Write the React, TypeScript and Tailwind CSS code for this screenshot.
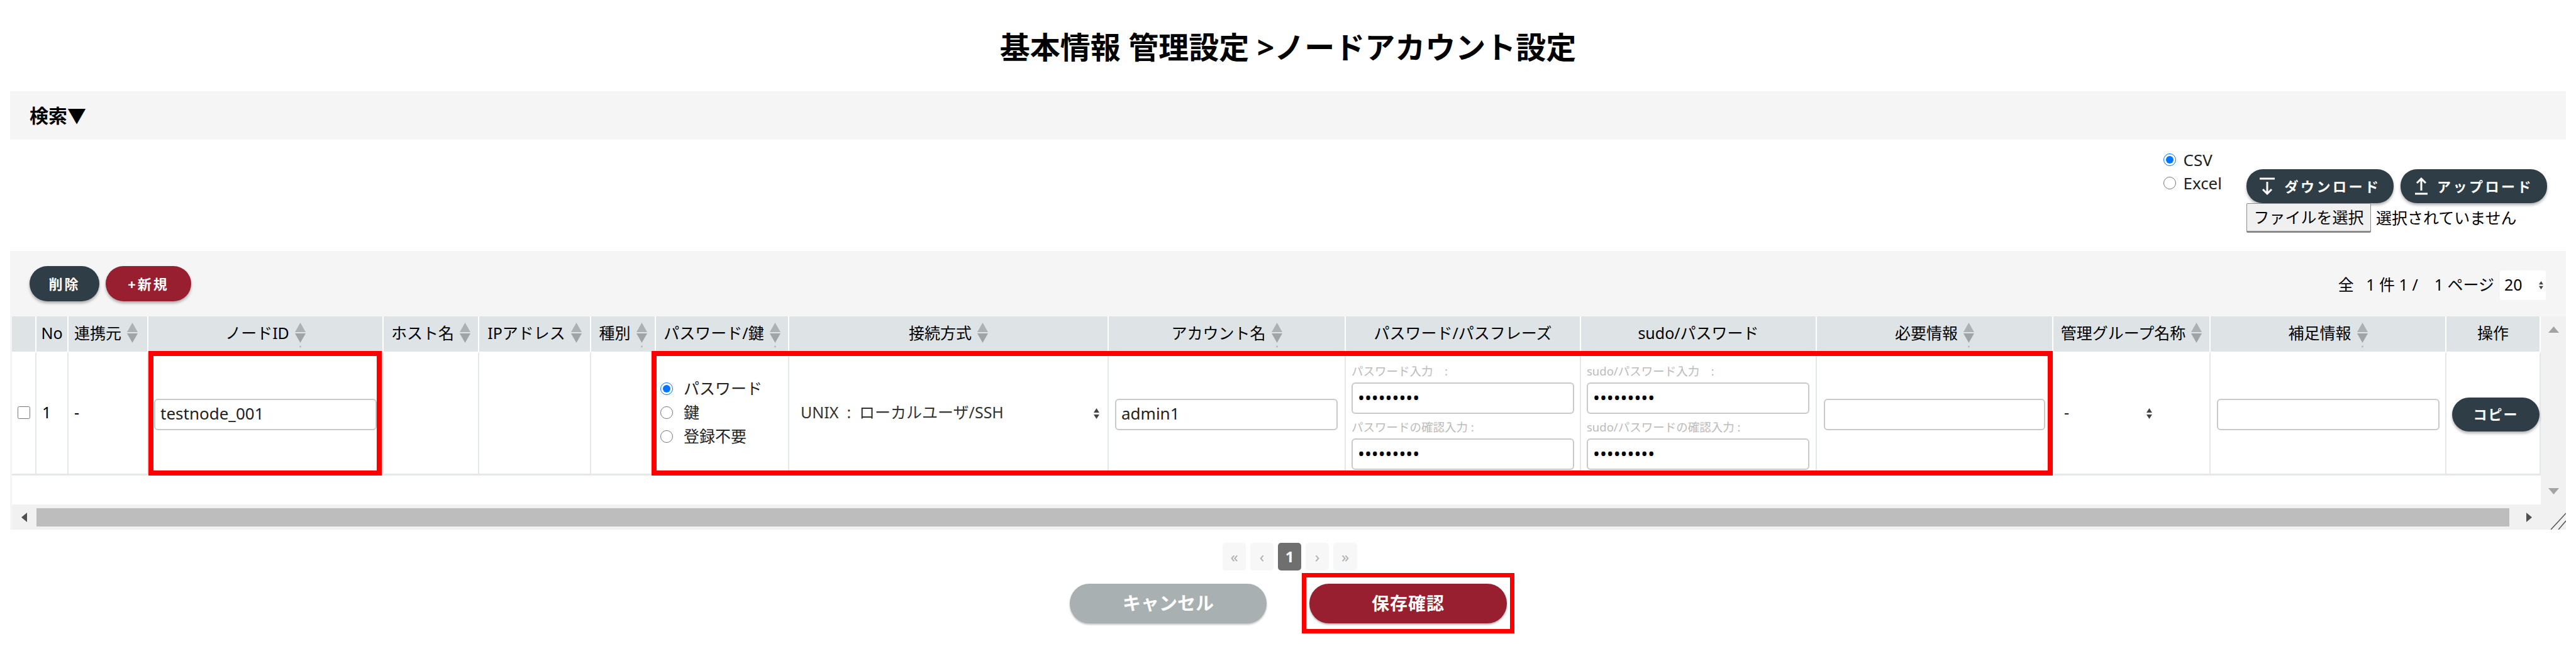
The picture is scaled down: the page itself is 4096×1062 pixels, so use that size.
import React from 'react';

const SortIcon = ({ dot }: { dot?: boolean }) => (
  <svg width="17" height="40" viewBox="0 0 17 40" className="shrink-0 mt-[6px]">
    <path d="M8.5 0 L17 15 L0 15 Z" fill="#adb1b4" />
    <path d="M0 17 L17 17 L8.5 32 Z" fill="#a0a4a7" />
    {dot && <circle cx="8.5" cy="38" r="1.5" fill="#b5b9bc" />}
  </svg>
);

const SelectArrows = () => (
  <svg width="9" height="17" viewBox="0 0 9 17" className="shrink-0">
    <path d="M4.5 0 L9 7 L0 7 Z" fill="#444" />
    <path d="M0 10 L9 10 L4.5 17 Z" fill="#444" />
  </svg>
);

const headers = [
  { label: '', sort: false },
  { label: 'No', sort: false },
  { label: '連携元', sort: true, left: true },
  { label: 'ノードID', sort: true, dot: true },
  { label: 'ホスト名', sort: true },
  { label: 'IPアドレス', sort: true },
  { label: '種別', sort: true, dot: true },
  { label: 'パスワード/鍵', sort: true, dot: true },
  { label: '接続方式', sort: true },
  { label: 'アカウント名', sort: true, dot: true },
  { label: 'パスワード/パスフレーズ', sort: false },
  { label: 'sudo/パスワード', sort: false },
  { label: '必要情報', sort: true, dot: true },
  { label: '管理グループ名称', sort: true },
  { label: '補足情報', sort: true, dot: true },
  { label: '操作', sort: false },
];

const tdClass = 'border-r-[2px] border-r-[#e4e8eb] border-b-[3px] border-b-[#e4e8eb] border-t-[3px] border-t-white align-middle p-0';
const inputClass = 'block h-[50px] rounded-[6px] border-[2px] border-[#c9c9c9] bg-white pl-[8px] pb-[4px] text-[26px] text-[#222] outline-none';
const passwordClass = 'block w-[354px] h-[50px] mt-[7px] rounded-[6px] border-[2px] border-[#c9c9c9] bg-white pl-[8px] pb-[4px] text-[29px] text-black outline-none';

const PasswordPair = ({ first, second }: { first: string; second: string }) => (
  <div className="flex flex-col pl-[9px]">
    <label className="h-[23px] text-[18.5px] leading-[23px] text-[#bbbbbb] whitespace-pre">{first}</label>
    <input type="password" defaultValue="password1" className={passwordClass} />
    <label className="h-[23px] mt-[9px] text-[18.5px] leading-[23px] text-[#bbbbbb] whitespace-pre">{second}</label>
    <input type="password" defaultValue="password1" className={passwordClass} />
  </div>
);

const App: React.FC = () => {
  return (
    <div className="w-[4096px] min-h-[1062px] bg-white text-black font-['Noto_Sans','Noto_Sans_CJK_JP',sans-serif]">
      {/* Title */}
      <div className="h-[145px] flex items-center justify-center pt-[4px]">
        <h1 className="text-[48px] font-bold leading-none">基本情報 管理設定 &gt;ノードアカウント設定</h1>
      </div>

      {/* Search */}
      <div className="mx-[16px] h-[77px] bg-[#f5f5f5] flex items-center pl-[31px]">
        <span className="text-[30px] font-bold leading-none">検索▼</span>
      </div>

      {/* CSV / Excel */}
      <div className="h-[177px] flex justify-end pr-[46px]">
        <div className="mt-[21px] mr-[39px] flex flex-col gap-[15px] text-[26px] leading-[22px] text-[#222]">
          <label className="flex items-center gap-[11px]">
            <input type="radio" name="format" defaultChecked className="w-[20px] h-[20px] m-0" />CSV
          </label>
          <label className="flex items-center gap-[11px]">
            <input type="radio" name="format" className="w-[20px] h-[20px] m-0" />Excel
          </label>
        </div>
        <div className="mt-[47px] w-[478px]">
          <div className="flex gap-[11px]">
            <button className="w-[234px] h-[54px] rounded-[26px] bg-[#2f3e46] text-white text-[22px] font-bold tracking-[3.5px] flex items-center justify-center gap-[14px] shadow-[0_3px_4px_rgba(0,0,0,0.3)]">
              <svg width="26" height="28" viewBox="0 0 26 28" fill="none" stroke="white" strokeWidth="3">
                <path d="M1 2 H25" />
                <path d="M13 7 V26 M6 19 L13 26 L20 19" />
              </svg>
              ダウンロード
            </button>
            <button className="w-[233px] h-[54px] rounded-[26px] bg-[#2f3e46] text-white text-[22px] font-bold tracking-[3.5px] flex items-center justify-center gap-[14px] shadow-[0_3px_4px_rgba(0,0,0,0.3)]">
              <svg width="22" height="28" viewBox="0 0 22 28" fill="none" stroke="white" strokeWidth="3">
                <path d="M1 26 H21" />
                <path d="M11 21 V2 M4 9 L11 2 L18 9" />
              </svg>
              アップロード
            </button>
          </div>
          <div className="flex items-center gap-[8px] text-[25px] leading-none">
            <button className="w-[198px] h-[47px] bg-[#f0f0f0] border border-[#8a8a8a] border-b-[3px] rounded-[2px] text-[25px] whitespace-nowrap">ファイルを選択</button>
            <span className="whitespace-nowrap">選択されていません</span>
          </div>
        </div>
      </div>

      {/* Table panel */}
      <div className="mx-[16px] bg-[#f5f5f5] pl-[3px]">
        <div className="h-[104px] flex items-center justify-between pl-[28px] pr-[32px]">
          <div className="flex gap-[10px]">
            <button className="w-[111px] h-[56px] rounded-[28px] bg-[#2f3e46] text-white text-[22px] font-bold tracking-[3px] shadow-[0_3px_4px_rgba(0,0,0,0.3)]">削除</button>
            <button className="w-[136px] h-[56px] rounded-[28px] bg-[#981f30] text-white text-[22px] font-bold tracking-[3px] shadow-[0_3px_4px_rgba(0,0,0,0.3)]">+新規</button>
          </div>
          <div className="flex items-center gap-[9px] mt-[4px] text-[25px]">
            <span className="whitespace-pre">全   1 件 1 /    1 ページ</span>
            <div className="w-[73px] h-[47px] bg-white rounded-[3px] flex items-center justify-between pl-[7px] pr-[4px]">
              20
              <svg width="7" height="15" viewBox="0 0 9 17"><path d="M4.5 0 L9 7 L0 7 Z M0 10 L9 10 L4.5 17 Z" fill="#444" /></svg>
            </div>
          </div>
        </div>

        <div className="flex">
          <div className="relative w-[4021px] h-[299px] bg-white">
            <table className="table-fixed w-[4021px] border-separate border-spacing-0 text-[25px]">
              <colgroup>
                <col className="w-[39px]" />
                <col className="w-[51px]" />
                <col className="w-[127px]" />
                <col className="w-[374px]" />
                <col className="w-[152px]" />
                <col className="w-[178px]" />
                <col className="w-[103px]" />
                <col className="w-[212px]" />
                <col className="w-[508px]" />
                <col className="w-[377px]" />
                <col className="w-[374px]" />
                <col className="w-[375px]" />
                <col className="w-[376px]" />
                <col className="w-[250px]" />
                <col className="w-[375px]" />
                <col className="w-[150px]" />
              </colgroup>
              <thead>
                <tr>
                  {headers.map((h) => (
                    <th key={h.label} className="h-[56px] bg-[#dee3e6] border-r-[2px] border-r-white p-0 font-normal">
                      <div className={`flex items-center gap-[9px] pb-[3px] whitespace-nowrap ${h.left ? 'justify-start pl-[9px]' : 'justify-center'}`}>
                        <span>{h.label}</span>
                        {h.sort && <SortIcon dot={h.dot} />}
                      </div>
                    </th>
                  ))}
                </tr>
              </thead>
              <tbody>
                <tr className="h-[197px]">
                  <td className={`${tdClass} pb-[4px]`}>
                    <div className="flex justify-center">
                      <input type="checkbox" className="w-[20px] h-[20px] m-0" />
                    </div>
                  </td>
                  <td className={`${tdClass} pl-[9px] pb-[3px]`}>1</td>
                  <td className={`${tdClass} pl-[9px] pb-[3px]`}>-</td>
                  <td className={`${tdClass} pl-[9px] pt-[3px]`}>
                    <input type="text" defaultValue="testnode_001" className={`${inputClass} w-[354px]`} />
                  </td>
                  <td className={tdClass}></td>
                  <td className={tdClass}></td>
                  <td className={tdClass}></td>
                  <td className={`${tdClass} pl-[7px] pb-[3px]`}>
                    <div className="flex flex-col gap-[12px] text-[#222]">
                      <label className="flex items-center gap-[17px] h-[26px]">
                        <input type="radio" name="auth" defaultChecked className="w-[20px] h-[20px] m-0" />パスワード
                      </label>
                      <label className="flex items-center gap-[17px] h-[26px]">
                        <input type="radio" name="auth" className="w-[20px] h-[20px] m-0" />鍵
                      </label>
                      <label className="flex items-center gap-[17px] h-[26px]">
                        <input type="radio" name="auth" className="w-[20px] h-[20px] m-0" />登録不要
                      </label>
                    </div>
                  </td>
                  <td className={`${tdClass} pl-[18px] pr-[13px]`}>
                    <div className="flex items-center justify-between text-[#333]">
                      <span className="whitespace-pre mb-[3px]">UNIX  :  ローカルユーザ/SSH</span>
                      <SelectArrows />
                    </div>
                  </td>
                  <td className={`${tdClass} pl-[10px] pt-[3px]`}>
                    <input type="text" defaultValue="admin1" className={`${inputClass} w-[354px]`} />
                  </td>
                  <td className={`${tdClass} align-top pt-[16px]`}>
                    <PasswordPair first="パスワード入力　:" second="パスワードの確認入力 :" />
                  </td>
                  <td className={`${tdClass} align-top pt-[16px]`}>
                    <PasswordPair first="sudo/パスワード入力　:" second="sudo/パスワードの確認入力 :" />
                  </td>
                  <td className={`${tdClass} pl-[11px] pt-[3px]`}>
                    <input type="text" className={`${inputClass} w-[352px]`} />
                  </td>
                  <td className={`${tdClass} pl-[17px]`}>
                    <div className="flex items-center justify-between w-[140px] text-[#222]">
                      <span className="mb-[3px]">-</span>
                      <SelectArrows />
                    </div>
                  </td>
                  <td className={`${tdClass} pl-[10px] pt-[3px]`}>
                    <input type="text" className={`${inputClass} w-[354px]`} />
                  </td>
                  <td className={`${tdClass} pl-[9px] pt-[2px]`}>
                    <button className="w-[139px] h-[54px] rounded-[27px] bg-[#2f3e46] text-white text-[22px] font-bold tracking-[2px] shadow-[0_3px_4px_rgba(0,0,0,0.3)]">コピー</button>
                  </td>
                </tr>
              </tbody>
            </table>

            {/* Red annotation frames */}
            <div className="absolute left-[217px] top-[55px] w-[371px] h-[198px] border-[8px] border-[#ff0000] pointer-events-none" />
            <div className="absolute left-[1017px] top-[55px] w-[2228px] h-[198px] border-[8px] border-[#ff0000] pointer-events-none" />
          </div>

          {/* Vertical scrollbar */}
          <div className="w-[40px] h-[299px] bg-[#f1f1f1] flex flex-col items-center justify-between py-[16px]">
            <svg width="17" height="10" viewBox="0 0 17 10"><path d="M8.5 0 L17 10 L0 10 Z" fill="#a3a3a3" /></svg>
            <svg width="17" height="10" viewBox="0 0 17 10"><path d="M0 0 L17 0 L8.5 10 Z" fill="#a3a3a3" /></svg>
          </div>
        </div>

        {/* Horizontal scrollbar */}
        <div className="h-[40px] bg-[#f1f1f1] flex items-center">
          <div className="w-[39px] flex justify-center">
            <svg width="9" height="15" viewBox="0 0 9 15"><path d="M9 0 L9 15 L0 7.5 Z" fill="#505050" /></svg>
          </div>
          <div className="w-[3932px] h-[29px] bg-[#bdbdbd]" />
          <div className="w-[50px] flex justify-center pl-[12px]">
            <svg width="9" height="15" viewBox="0 0 9 15"><path d="M0 0 L9 7.5 L0 15 Z" fill="#505050" /></svg>
          </div>
          <div className="w-[40px] h-[40px] flex items-end justify-end">
            <svg width="30" height="30" viewBox="0 0 30 30" stroke="#555" strokeWidth="1.5">
              <path d="M6 30 L30 4" />
              <path d="M18 30 L30 16" />
            </svg>
          </div>
        </div>
      </div>

      {/* Pager */}
      <div className="mt-[21px] flex justify-center gap-[7px] pl-[6px] text-[24px] leading-none">
        <span className="w-[37px] h-[44px] rounded-[5px] bg-[#f7f7f7] text-[#b0b0b0] flex items-center justify-center">«</span>
        <span className="w-[37px] h-[44px] rounded-[5px] bg-[#f7f7f7] text-[#b0b0b0] flex items-center justify-center">‹</span>
        <span className="w-[37px] h-[44px] rounded-[5px] bg-[#6f6f6f] text-white font-bold flex items-center justify-center">1</span>
        <span className="w-[37px] h-[44px] rounded-[5px] bg-[#f7f7f7] text-[#b0b0b0] flex items-center justify-center">›</span>
        <span className="w-[38px] h-[44px] rounded-[5px] bg-[#f7f7f7] text-[#b0b0b0] flex items-center justify-center">»</span>
      </div>

      {/* Footer actions */}
      <div className="mt-[4px] flex items-center justify-center gap-[56px] pl-[13px]">
        <button className="w-[313px] h-[63px] rounded-[31px] bg-[#a9b0b2] text-white text-[29px] font-bold shadow-[0_2px_3px_rgba(0,0,0,0.25)]">キャンセル</button>
        <div className="w-[338px] h-[96px] border-[7px] border-[#ff0000] flex items-center justify-center">
          <button className="w-[314px] h-[63px] rounded-[31px] bg-[#981f30] text-white text-[28px] font-bold tracking-[1px] shadow-[0_2px_3px_rgba(0,0,0,0.3)]">保存確認</button>
        </div>
      </div>
    </div>
  );
};

export default App;
